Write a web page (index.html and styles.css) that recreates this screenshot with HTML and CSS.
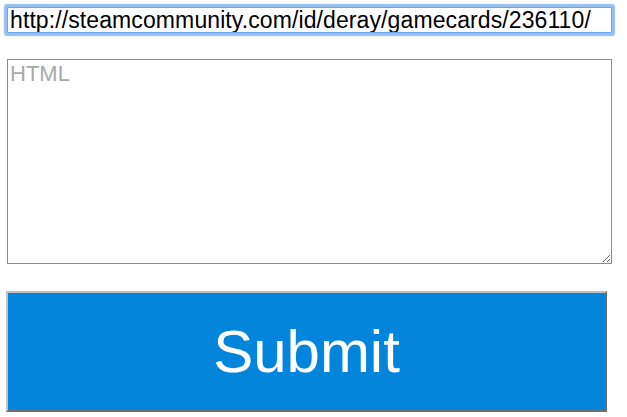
FILE: index.html
```html
<!DOCTYPE html>
<html>
<head>
<meta charset="utf-8">
<link rel="stylesheet" href="styles.css">
</head>
<body>
<form class="form">
  <input class="url" type="text" value="http://steamcommunity.com/id/deray/gamecards/236110/">
  <textarea class="html" placeholder="HTML"></textarea>
  <button class="submit" type="button">Submit</button>
</form>
</body>
</html>
```
FILE: styles.css
```css
html, body {
  margin: 0;
  padding: 0;
  background: #ffffff;
}
.form {
  display: flex;
  flex-direction: column;
  align-items: flex-start;
  padding: 7px 0 0 7px;
  font-family: "Liberation Sans", Arial, sans-serif;
}
.url {
  box-sizing: border-box;
  width: 605px;
  height: 26px;
  margin: 0;
  padding: 0 2px;
  border: 1px solid #6ea5ee;
  border-radius: 1px;
  font-family: "Liberation Sans", Arial, sans-serif;
  font-size: 23px;
  letter-spacing: 0.1px;
  color: #000;
  background: #fff;
  outline: none;
  box-shadow: 0 0 1px 3px #93bff3;
}
.html {
  box-sizing: border-box;
  width: 605px;
  height: 205px;
  margin: 26px 0 0 0;
  padding: 1px 2px;
  border: 1px solid #8c8c8c;
  font-family: "Liberation Sans", Arial, sans-serif;
  font-size: 22px;
  resize: both;
  outline: none;
}
.html::placeholder {
  color: #a9a9a9;
}
.submit {
  box-sizing: border-box;
  width: 601px;
  height: 121px;
  margin: 27px 0 0 -1px;
  padding: 0;
  border-style: solid;
  border-width: 2px;
  border-color: #c2c2c2 #6e6e6e #6e6e6e #c2c2c2;
  background: #0285db;
  color: #ffffff;
  font-family: "Liberation Sans", Arial, sans-serif;
  font-size: 60px;
  cursor: pointer;
}
```
